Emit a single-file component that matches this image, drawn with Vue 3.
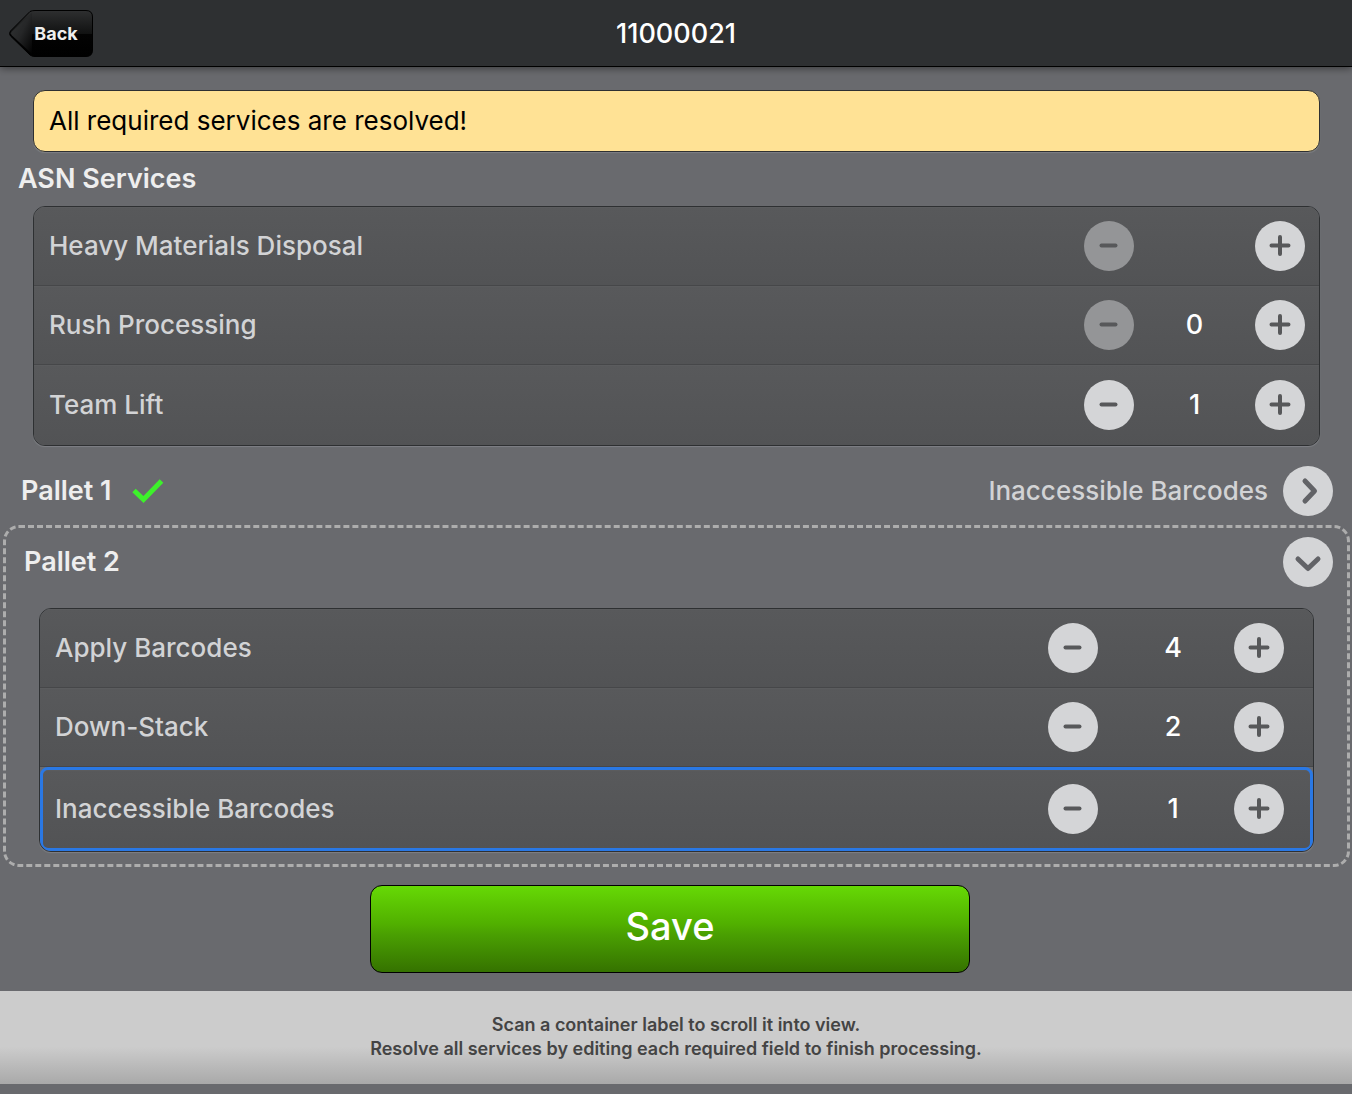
<script setup>
import { ref } from 'vue'

const asnServices = ref([
  { id: 'heavy', name: 'Heavy Materials Disposal', count: '' },
  { id: 'rush', name: 'Rush Processing', count: 0 },
  { id: 'lift', name: 'Team Lift', count: 1 }
])

const palletServices = ref([
  { id: 'apply', name: 'Apply Barcodes', count: 4 },
  { id: 'down', name: 'Down-Stack', count: 2 },
  { id: 'inaccessible', name: 'Inaccessible Barcodes', count: 1, active: true }
])

function step(service, amount) {
  service.count = Math.max(0, Number(service.count) + amount)
}
</script>

<template>
  <div class="page">
    <header class="bar">
      <button class="back" type="button">
        <svg class="back-shape" viewBox="0 0 86 48" width="86" height="48" aria-hidden="true">
          <defs>
            <linearGradient id="backFill" x1="0" y1="0" x2="0" y2="1">
              <stop offset="0" stop-color="#2e2f30" />
              <stop offset="0.5" stop-color="#111212" />
              <stop offset="0.52" stop-color="#030303" />
              <stop offset="1" stop-color="#000" />
            </linearGradient>
            <linearGradient id="tipFill" x1="0" y1="0" x2="1" y2="1">
              <stop offset="0" stop-color="#343637" />
              <stop offset="0.5" stop-color="#252627" />
              <stop offset="1" stop-color="#000" />
            </linearGradient>
          </defs>
          <path d="M22 1.500Q24 .5 27 .5H78Q84.500 .5 84.500 7V40Q84.500 46.500 78 46.500H27Q24 46.500 22 45L2.500 26Q.5 23.500 2.500 21Z" fill="url(#backFill)" stroke="#000" />
          <path d="M24 2.500 4 21.500Q2 23.500 4 25.500L24 44Z" fill="url(#tipFill)" />
        </svg>
        <span class="back-text">Back</span>
      </button>
      <h1 class="title">11000021</h1>
    </header>

    <main>
      <p class="banner" role="status">All required services are resolved!</p>

      <h2 class="heading">ASN Services</h2>
      <ul class="list">
        <li v-for="s in asnServices" :key="s.id" class="row">
          <label class="name" :for="s.id">{{ s.name }}</label>
          <button class="round" type="button" :disabled="!s.count" :aria-label="`Fewer ${s.name}`" @click="step(s, -1)">
            <svg viewBox="0 0 50 50" aria-hidden="true"><path d="M17.500 24.500H31.500" /></svg>
          </button>
          <input :id="s.id" v-model="s.count" class="count" type="text" inputmode="numeric" />
          <button class="round" type="button" :aria-label="`More ${s.name}`" @click="step(s, 1)">
            <svg viewBox="0 0 50 50" aria-hidden="true"><path d="M16.500 24.500H33.500M25 16V33" /></svg>
          </button>
        </li>
      </ul>

      <section class="pallet">
        <h2 class="pallet-title">Pallet 1</h2>
        <svg class="check" viewBox="0 0 32 26" width="32" height="26" role="img" aria-label="Resolved">
          <path d="M2 12.500 11.500 21.500 29.500 3" fill="none" stroke="#3df12b" stroke-width="5" />
        </svg>
        <span class="summary">Inaccessible Barcodes</span>
        <button class="round chevron" type="button" aria-label="Expand Pallet 1">
          <svg viewBox="0 0 50 50" aria-hidden="true"><path d="M22 15 31.500 25 22 35" /></svg>
        </button>
      </section>

      <section class="open">
        <div class="open-head">
          <h2 class="pallet-title">Pallet 2</h2>
          <button class="round chevron" type="button" aria-label="Collapse Pallet 2">
            <svg viewBox="0 0 50 50" aria-hidden="true"><path d="M15 22 25 31.500 35 22" /></svg>
          </button>
        </div>
        <ul class="list inner">
          <li v-for="s in palletServices" :key="s.id" class="row" :class="{ active: s.active }">
            <label class="name" :for="s.id">{{ s.name }}</label>
            <button class="round" type="button" :disabled="!s.count" :aria-label="`Fewer ${s.name}`" @click="step(s, -1)">
              <svg viewBox="0 0 50 50" aria-hidden="true"><path d="M17.500 24.500H31.500" /></svg>
            </button>
            <input :id="s.id" v-model="s.count" class="count" type="text" inputmode="numeric" />
            <button class="round" type="button" :aria-label="`More ${s.name}`" @click="step(s, 1)">
              <svg viewBox="0 0 50 50" aria-hidden="true"><path d="M16.500 24.500H33.500M25 16V33" /></svg>
            </button>
          </li>
        </ul>
      </section>

      <div class="actions">
        <button class="save" type="button">Save</button>
      </div>
    </main>

    <footer class="hint">
      <p>Scan a container label to scroll it into view.</p>
      <p>Resolve all services by editing each required field to finish processing.</p>
    </footer>
  </div>
</template>

<style>
body {
  margin: 0;
  background: #696a6e;
}
</style>

<style scoped>
.page {
  min-height: 100vh;
  background: #696a6e;
  font-family: Inter, "Liberation Sans", sans-serif;
  color: #eee;
}
h1, h2, p, ul {
  margin: 0;
  padding: 0;
}
button, input {
  font-family: inherit;
}
.bar {
  display: grid;
  grid-template-columns: 1fr auto 1fr;
  align-items: center;
  box-sizing: border-box;
  height: 67px;
  padding: 2px 8px 0;
  background: #2e3032;
  border-bottom: 1px solid #000;
  box-shadow: 0 1px 8px rgba(0, 0, 0, 0.5);
}
.back {
  display: grid;
  justify-self: start;
  padding: 0;
  border: 0;
  background: none;
  color: #eee;
  font-size: 18px;
  font-weight: 700;
  line-height: 48px;
}
.back-shape, .back-text {
  grid-area: 1 / 1;
}
.back-text {
  z-index: 1;
  padding-left: 10px;
}
.title {
  color: #fff;
  font-size: 27px;
  font-weight: 500;
  line-height: 32px;
}
.banner {
  margin: 23px 32px 0 33px;
  padding: 14px 15px;
  border: 1px solid #2e3032;
  border-radius: 12px;
  background: #ffe295;
  box-shadow: 0 1px 1px #7f8085;
  color: #000;
  font-size: 26px;
  line-height: 32px;
}
.heading {
  margin: 10px 18px;
  font-size: 27px;
  font-weight: 600;
  line-height: 34px;
}
.list {
  margin: 0 32px 0 33px;
  border: 1px solid #2e3032;
  border-radius: 12px;
  box-shadow: 0 1px 1px #7f8085;
  list-style: none;
  overflow: hidden;
}
.row {
  display: flex;
  align-items: center;
  box-sizing: border-box;
  padding: 14px 14px 14px 15px;
  border-bottom: 1px solid #464749;
  background: linear-gradient(#58595b, #525355);
  box-shadow: inset 0 1px #5b5c5e;
}
.row:last-child {
  min-height: 80px;
  border-bottom: 0;
}
.name {
  flex: 1;
  color: #d2d3d5;
  font-size: 26px;
  font-weight: 500;
  line-height: 32px;
}
.round {
  flex: none;
  width: 50px;
  height: 50px;
  padding: 0;
  border: 0;
  border-radius: 50%;
  background: #d4d5d7;
}
.round:disabled {
  background: #949597;
}
.round svg {
  display: block;
  fill: none;
  stroke: #57585a;
  stroke-width: 4;
  stroke-linecap: round;
  stroke-linejoin: round;
}
.chevron svg {
  stroke: #626367;
  stroke-width: 5;
}
.count {
  width: 121px;
  height: 50px;
  box-sizing: border-box;
  padding: 0 0 2px;
  border: 0;
  background: none;
  color: #fff;
  font-size: 27px;
  font-weight: 500;
  text-align: center;
}
.pallet, .open-head {
  display: flex;
  align-items: center;
}
.pallet {
  padding: 20px 19px 9px 21px;
}
.pallet-title {
  font-size: 27px;
  font-weight: 600;
  line-height: 34px;
}
.check {
  margin-left: 20px;
}
.summary {
  margin-left: auto;
  margin-right: 15px;
  color: #d2d3d5;
  font-size: 26px;
  font-weight: 500;
  line-height: 32px;
}
.open {
  margin: 0 2px 0 3px;
  border: 3px dashed #adadad;
  border-radius: 16px;
  padding-bottom: 12px;
}
.open-head {
  justify-content: space-between;
  padding: 9px 14px 21px 18px;
}
.inner {
  margin: 0 33px;
}
.inner .row {
  padding-right: 29px;
}
.inner .count {
  width: 136px;
  padding-left: 14px;
}
.inner .row.active {
  padding: 14px 26px 14px 12px;
  border: 3px solid #2a78e4;
  border-radius: 8px;
}
.actions {
  display: flex;
  justify-content: center;
  padding: 18px 12px 18px 0;
}
.save {
  width: 600px;
  height: 88px;
  padding: 0 0 6px;
  border: 1px solid #000;
  border-radius: 12px;
  background: linear-gradient(#66d905, #51b000 44%, #4aa002 56%, #357200);
  color: #fff;
  font-size: 38px;
  font-weight: 500;
}
.hint {
  padding: 22px 0 23px;
  background: linear-gradient(#ccc 60%, #a9a9a9);
  color: #444;
  font-size: 18px;
  font-weight: 600;
  line-height: 24px;
  text-align: center;
}
</style>
